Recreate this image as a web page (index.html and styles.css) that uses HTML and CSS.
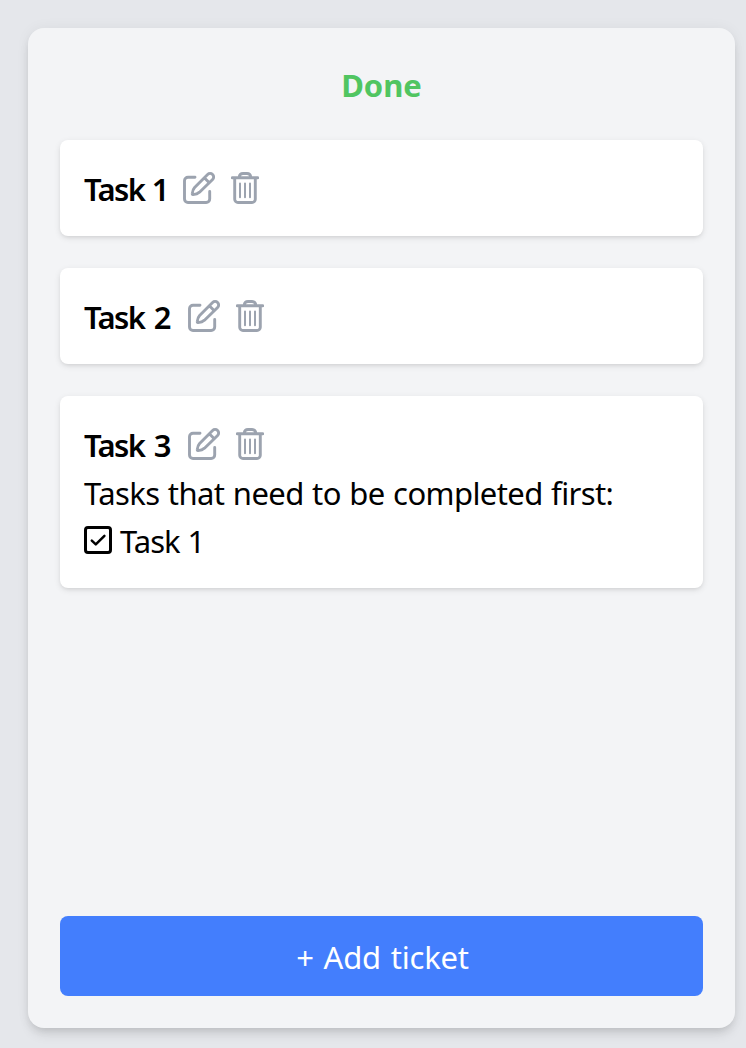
FILE: index.html
```
<!DOCTYPE html>
<html lang="en">
<head>
<meta charset="utf-8">
<title>Done</title>
<link rel="stylesheet" href="styles.css">
</head>
<body>
<svg class="sprite" aria-hidden="true">
  <symbol id="edit" viewBox="0 0 32 32"><path d="M12 5.3H5A3.5 3.5 0 0 0 1.5 8.8v18.2A3.5 3.5 0 0 0 5 30.5h18.2a3.5 3.5 0 0 0 3.5-3.5v-7.5M10 22.6c-.7 0-.8-.5-.7-1.1.3-2.7 1-4.5 2.3-5.9L24.6 2.5a3.5 3.5 0 0 1 5 5L16.5 20.2c-1.8 1.6-3.8 2.2-6.5 2.4zM21.3 5.7l5 5"/></symbol>
  <symbol id="trash" viewBox="0 0 28 32"><path d="M1.2 5.7h25.6M3.7 5.7v21.5a3.3 3.3 0 0 0 3.3 3.3h14a3.3 3.3 0 0 0 3.3-3.3V5.7M8.2 5.2C8.5 2.7 9.8 1.5 12 1.5h4c2.2 0 3.5 1.2 3.8 3.7"/><path class="thin" d="M9 11.5v13.8M14 11.5v13.8M19 11.5v13.8"/></symbol>
</svg>
<main class="column">
  <h2 class="heading">Done</h2>
  <section class="cards">
    <article class="card"><div class="row"><strong class="title one">Task 1</strong><svg class="icon edit"><use href="#edit"/></svg><svg class="icon trash"><use href="#trash"/></svg></div></article>
    <article class="card"><div class="row"><strong class="title">Task 2</strong><svg class="icon edit"><use href="#edit"/></svg><svg class="icon trash"><use href="#trash"/></svg></div></article>
    <article class="card">
      <div class="row"><strong class="title">Task 3</strong><svg class="icon edit"><use href="#edit"/></svg><svg class="icon trash"><use href="#trash"/></svg></div>
      <p class="row"><span class="note">Tasks that need to be completed first:</span></p>
      <div class="row"><svg class="check" viewBox="0 0 28 28"><rect x="1.5" y="1.5" width="25" height="25" rx="2.5"/><path d="M7.8 14.6l4 3.8 8.6-8.6"/></svg><span class="dependency">Task 1</span></div>
    </article>
  </section>
  <button class="add">+ Add ticket</button>
</main>
</body>
</html>
```
FILE: styles.css
```
* { box-sizing: border-box; }
body {
  margin: 0;
  padding: 28px 11px 20px 28px;
  height: 1048px;
  overflow: hidden;
  background: #e5e7eb;
  color: #000;
  font: 31px/48px "Segoe UI", "Noto Sans", sans-serif;
}
.sprite { display: none; }
.column {
  display: flex;
  flex-direction: column;
  height: 1000px;
  padding: 32px;
  border-radius: 16px;
  background: #f3f4f6;
  box-shadow: 0 8px 12px -2px rgba(0,0,0,.1), 0 4px 8px -4px rgba(0,0,0,.1), 0 0 14px rgba(0,0,0,.05);
}
.heading {
  margin: 0 0 32px;
  padding-top: 1px;
  height: 48px;
  font-size: 31px;
  font-weight: 700;
  text-align: center;
  color: #50c561;
}
.cards { display: flex; flex-direction: column; gap: 32px; flex: 1; }
.card {
  padding: 24px;
  border-radius: 8px;
  background: #fff;
  box-shadow: 0 2px 6px rgba(0,0,0,.1), 0 2px 4px -2px rgba(0,0,0,.1);
}
.row { display: flex; height: 48px; margin: 0; white-space: nowrap; }
.title, .note, .dependency { padding-top: 1px; }
.title { width: 104px; font-weight: 600; letter-spacing: -1.6px; word-spacing: 3px; }
.one { width: 99px; word-spacing: 1px; }
.note { letter-spacing: -.6px; word-spacing: 1px; }
.dependency { letter-spacing: -1px; word-spacing: 1px; }
.icon {
  height: 32px;
  margin-top: 8px;
  fill: none;
  stroke: #9ca3af;
  stroke-width: 2.9;
  stroke-linecap: round;
  stroke-linejoin: round;
}
.edit { width: 32px; margin-right: 16px; }
.trash { width: 28px; }
.thin { stroke-width: 2; }
.check {
  width: 28px;
  height: 28px;
  margin: 10px 8px 0 0;
  fill: none;
  stroke: #000;
  stroke-width: 3;
}
.check path { stroke-width: 2.5; stroke-linecap: round; stroke-linejoin: round; }
.add {
  height: 80px;
  padding: 1px 0 0 2px;
  border: 0;
  border-radius: 8px;
  background: #437efd;
  color: #fff;
  font: inherit;
  letter-spacing: -.2px;
  word-spacing: 2px;
}
```
